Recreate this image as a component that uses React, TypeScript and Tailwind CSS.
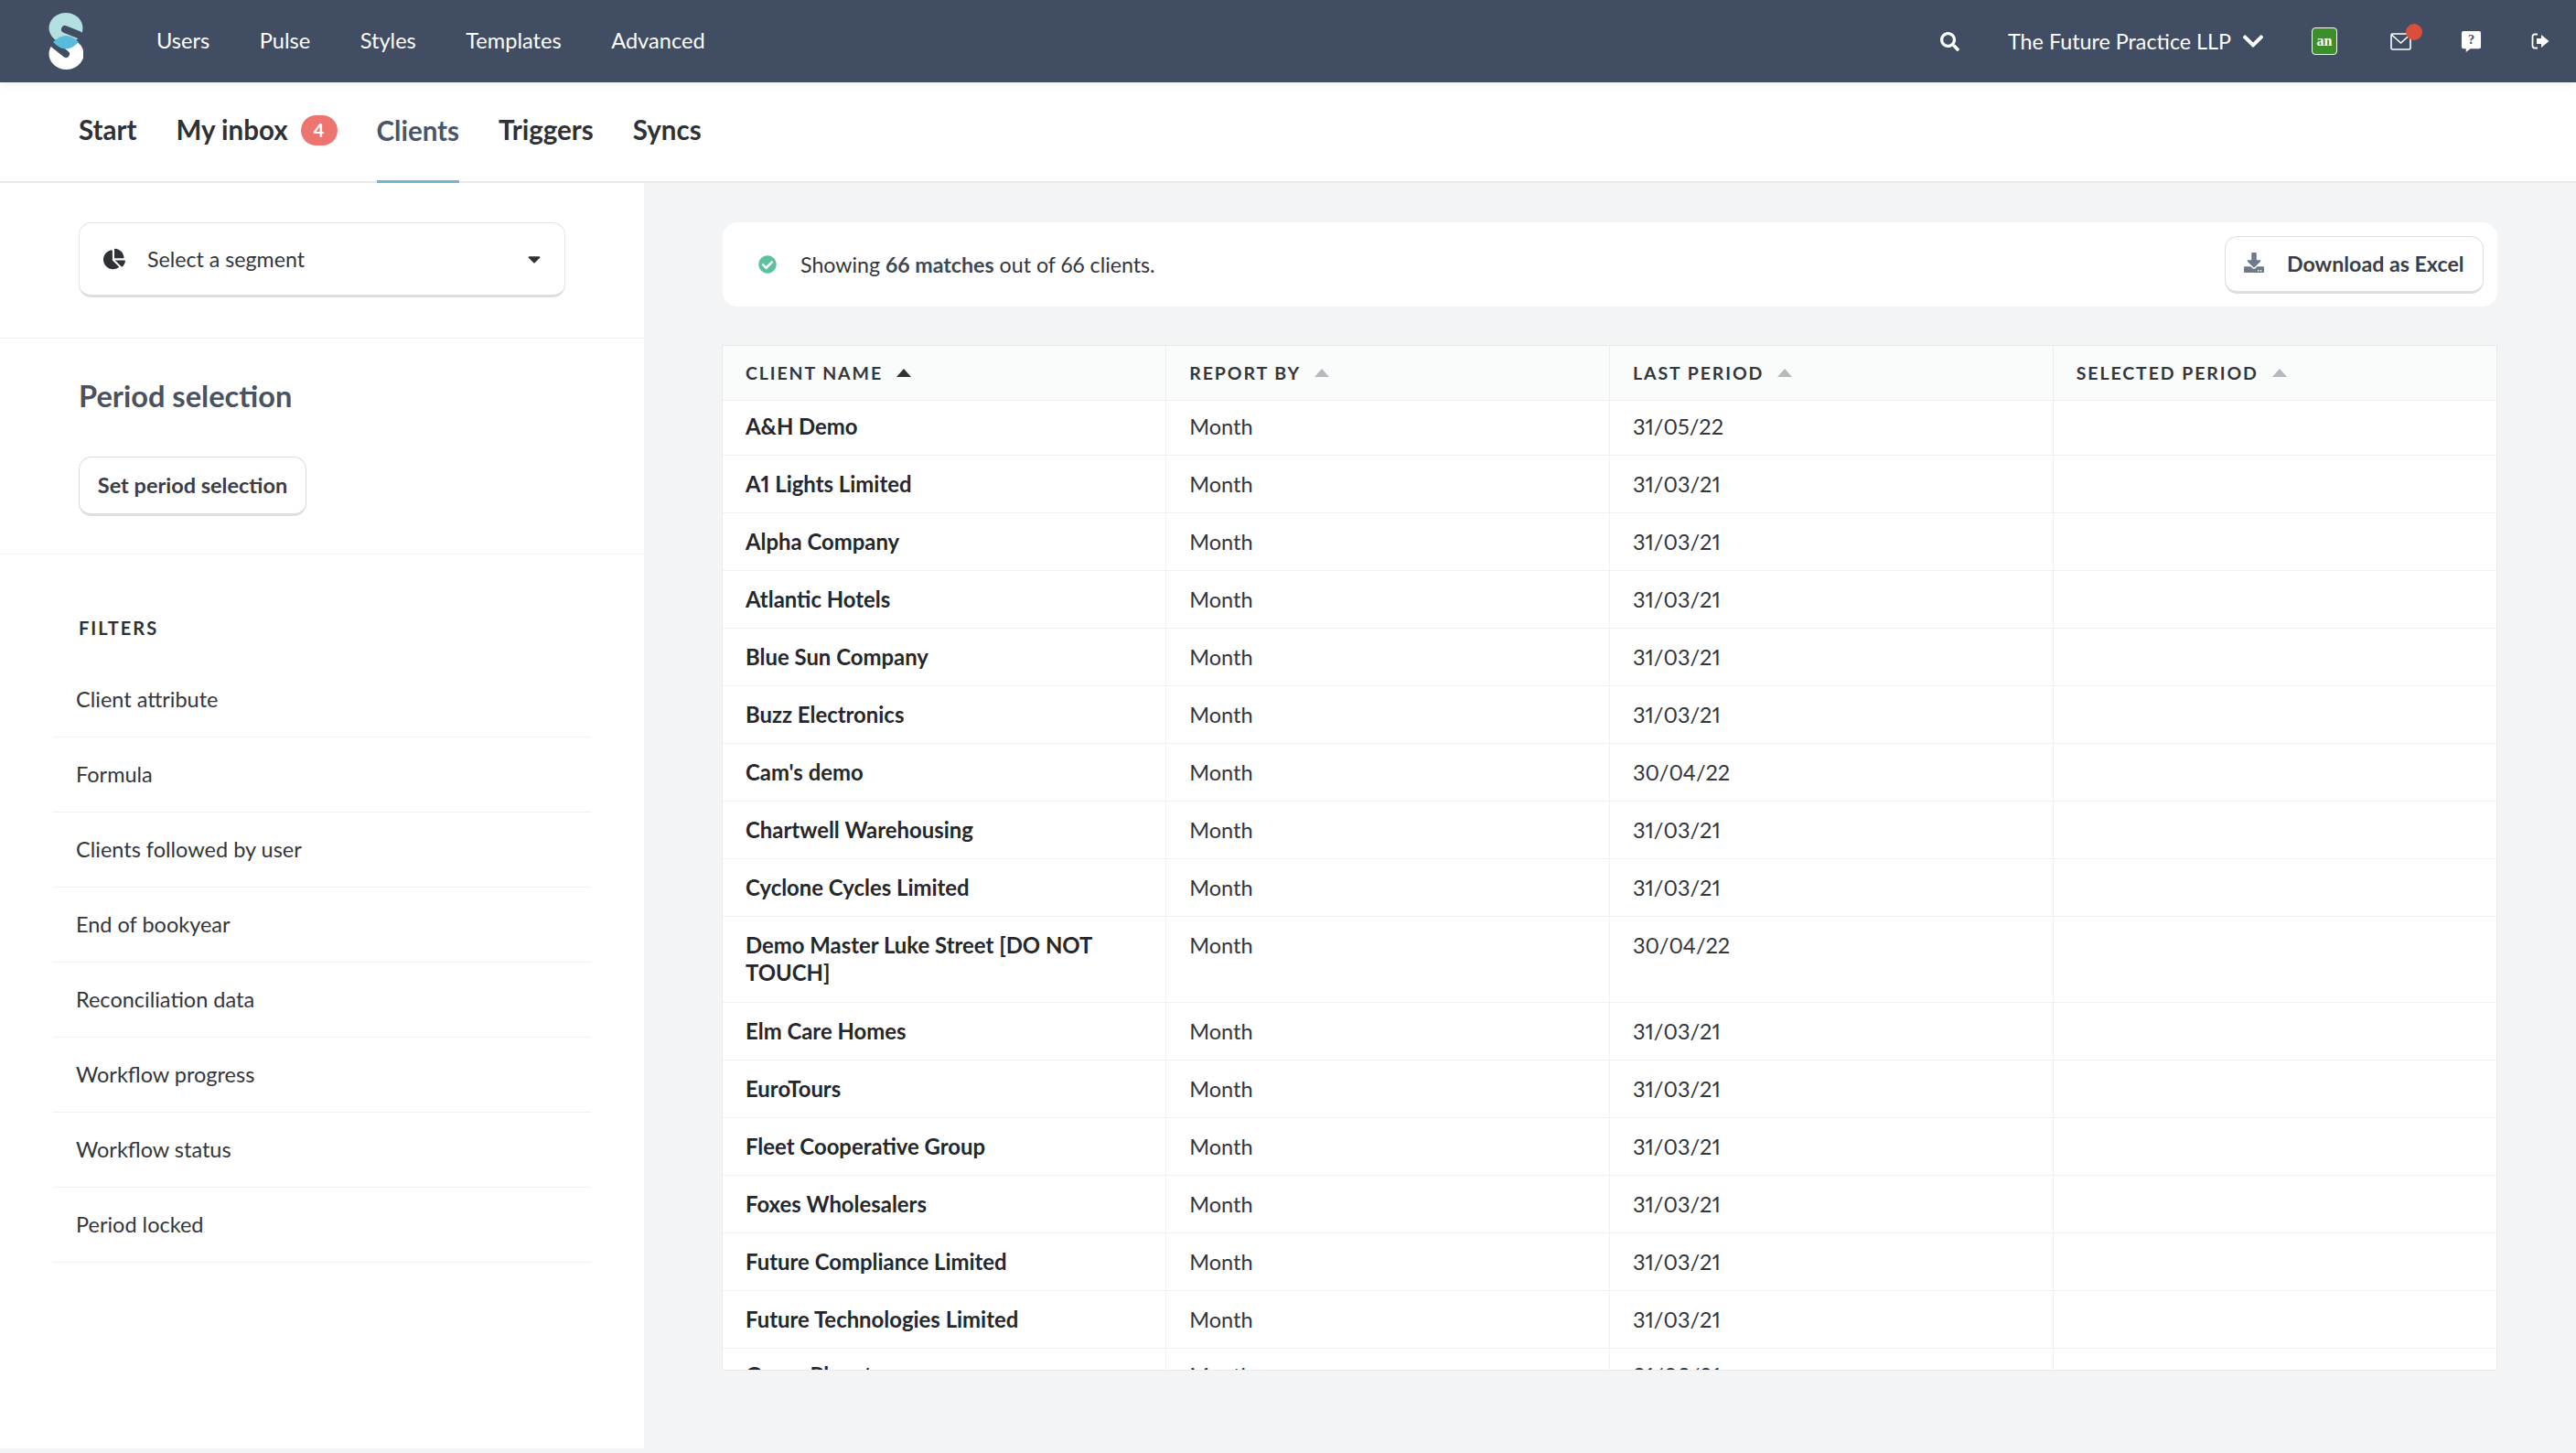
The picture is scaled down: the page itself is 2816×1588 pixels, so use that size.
import React from 'react';
import { FaSearch, FaChevronDown, FaChartPie, FaCaretDown, FaCheckCircle, FaDownload } from 'react-icons/fa';

const navItems = ['Users', 'Pulse', 'Styles', 'Templates', 'Advanced'];
const filters = ['Client attribute', 'Formula', 'Clients followed by user', 'End of bookyear', 'Reconciliation data', 'Workflow progress', 'Workflow status', 'Period locked'];
const columns = ['CLIENT NAME', 'REPORT BY', 'LAST PERIOD', 'SELECTED PERIOD'];

const clients = [
  ['A&H Demo', '31/05/22'],
  ['A1 Lights Limited', '31/03/21'],
  ['Alpha Company', '31/03/21'],
  ['Atlantic Hotels', '31/03/21'],
  ['Blue Sun Company', '31/03/21'],
  ['Buzz Electronics', '31/03/21'],
  ["Cam's demo", '30/04/22'],
  ['Chartwell Warehousing', '31/03/21'],
  ['Cyclone Cycles Limited', '31/03/21'],
  ['Demo Master Luke Street [DO NOT TOUCH]', '30/04/22'],
  ['Elm Care Homes', '31/03/21'],
  ['EuroTours', '31/03/21'],
  ['Fleet Cooperative Group', '31/03/21'],
  ['Foxes Wholesalers', '31/03/21'],
  ['Future Compliance Limited', '31/03/21'],
  ['Future Technologies Limited', '31/03/21'],
  ['Green Planet', '31/03/21'],
];

const Logo = () => (
  <svg width="38" height="62" viewBox="13 9 38 62">
    <ellipse cx="32" cy="25.5" rx="18.5" ry="16.5" fill="#b3dfe1" />
    <ellipse cx="32.5" cy="54" rx="19" ry="17" fill="#ffffff" />
    <path d="M31 27 L46 33" stroke="#414d63" strokeWidth="8" strokeLinecap="round" />
    <path d="M32 54 L17 42" stroke="#414d63" strokeWidth="8" strokeLinecap="round" />
    <path d="M18 41 Q32 27 46 41 Q32 56 18 41 Z" fill="#58bbdc" />
  </svg>
);

const App: React.FC = () => {
  const cellPad = (i: number) => {
    if (i === 0) return 'pt-[13px] pb-[16px]';
    if (i === 9) return 'pt-[16px] pb-[17px]';
    if (i === 16) return 'pt-[14px] pb-[16px]';
    return 'pt-[16px] pb-[16px]';
  };

  return (
    <div className="h-[1588px] w-[2816px] overflow-hidden flex flex-col bg-[#f2f4f5] font-['Lato',sans-serif] text-[#33363b] proportional-nums">
      <header className="relative z-10 h-[90px] shrink-0 bg-[#414d63] flex items-center text-white shadow-[0_3px_8px_rgba(0,0,0,0.05)]">
        <div className="w-[171px] pl-[53px]"><Logo /></div>
        <nav className="flex gap-[54.5px] text-[23.6px]">
          {navItems.map(n => <span key={n}>{n}</span>)}
        </nav>
        <div className="ml-auto flex items-center pr-[29px]">
          <FaSearch size={21} />
          <span className="ml-[53px] text-[23.3px]">The Future Practice LLP</span>
          <FaChevronDown size={26} className="ml-[11px]" />
          <span className="ml-[51px] w-[28px] h-[30px] rounded-[4px] bg-[#3b8f2a] border border-white flex items-center justify-center text-[16px] font-bold font-['Liberation_Serif',serif]">an</span>
          <span className="relative ml-[58px]">
            <svg className="block" width="23" height="19" viewBox="0 0 23 19" fill="none" stroke="#ffffff" strokeWidth="1.6">
              <rect x="1" y="1" width="21" height="17" rx="1.5" />
              <path d="M1.5 2 L11.5 11 L21.5 2" />
            </svg>
            <span className="absolute -top-[10px] left-[17px] w-[18px] h-[18px] rounded-full bg-[#d8503a]" />
          </span>
          <svg className="ml-[54px]" width="23" height="25" viewBox="0 0 24 26">
            <path d="M3 1 H21 A2 2 0 0 1 23 3 V19 A2 2 0 0 1 21 21 H11 L6 25 V21 H3 A2 2 0 0 1 1 19 V3 A2 2 0 0 1 3 1 Z" fill="#ffffff" />
            <text x="12" y="16" textAnchor="middle" fontSize="15" fontWeight="700" fill="#414d63" fontFamily="Liberation Serif, serif">?</text>
          </svg>
          <svg className="ml-[54px]" width="20" height="18" viewBox="0 0 20 18">
            <path d="M7 1.5 H4 A2.5 2.5 0 0 0 1.5 4 V14 A2.5 2.5 0 0 0 4 16.5 H7" fill="none" stroke="#ffffff" strokeWidth="1.8" />
            <path d="M6 6 H11 V2 L19.5 9 L11 16 V12 H6 Z" fill="#ffffff" />
          </svg>
        </div>
      </header>

      <div className="h-[110px] shrink-0 bg-white border-b-2 border-[#e8eaec] flex pl-[86px] gap-[43px] text-[29.5px] font-bold text-[#2e3135]">
        <span className="flex items-center pb-[4px]">Start</span>
        <span className="flex items-center pb-[4px]">
          My inbox
          <span className="ml-[14px] w-[40px] h-[33px] rounded-full bg-[#ee7470] text-white text-[20px] font-bold flex items-center justify-center">4</span>
        </span>
        <span className="flex items-center pb-[1px] text-[#4a5568] border-b-[3px] border-[#6db8cc] -mb-[2px]">Clients</span>
        <span className="flex items-center pb-[4px]">Triggers</span>
        <span className="flex items-center pb-[4px]">Syncs</span>
      </div>

      <div className="flex flex-1 min-h-0 pb-[5px]">
        <aside className="w-[704px] shrink-0 bg-white">
          <div className="h-[170px] pt-[43px] pl-[86px] border-b border-[#f0f1f3]">
            <div className="w-[532px] h-[82px] rounded-[14px] border border-[#e3e5e8] border-b-[3px] border-b-[#dcdee1] flex items-center pl-[26px] pr-[22px] text-[23.2px]">
              <FaChartPie size={24} className="text-[#2e3135]" />
              <span className="ml-[24px]">Select a segment</span>
              <FaCaretDown size={22} className="ml-auto text-[#2e3135]" />
            </div>
          </div>
          <div className="h-[236px] pl-[86px] pt-[42px] border-b border-[#f0f1f3]">
            <h2 className="text-[32.6px] leading-[42px] font-bold text-[#4a5260]">Period selection</h2>
            <button className="mt-[45px] h-[65px] w-[249px] rounded-[14px] border border-[#dcdee1] border-b-[3px] bg-white text-[23.5px] font-bold text-[#3a3e47]">Set period selection</button>
          </div>
          <h3 className="ml-[86px] mt-[68px] text-[20px] leading-[24px] font-bold tracking-[2px] text-[#2e3135]">FILTERS</h3>
          <ul className="mx-[58px] mt-[26px] text-[23.5px]">
            {filters.map(f => (
              <li key={f} className="h-[82px] pl-[25px] flex items-center border-b border-[#f0f1f3]">{f}</li>
            ))}
          </ul>
        </aside>

        <main className="flex-1 min-w-0 pl-[86px] pr-[86px] pt-[43px]">
          <div className="h-[92px] rounded-[16px] bg-white flex items-center pl-[39px] pr-[15px] text-[23.2px]">
            <FaCheckCircle size={20} className="text-[#5cc19c]" />
            <span className="ml-[26px]">Showing <b className="font-bold text-[#3f4755]">66 matches</b> out of 66 clients.</span>
            <button className="ml-auto h-[63px] w-[283px] rounded-[14px] border border-[#dcdee1] border-b-[3px] flex items-center pl-[20px] text-[23.2px] font-bold text-[#3a3e47] bg-white">
              <FaDownload size={22} className="text-[#6e7a8a] -mt-[2px]" />
              <span className="ml-[25px]">Download as Excel</span>
            </button>
          </div>

          <div className="mt-[42px] -ml-[1px] h-[1121px] overflow-hidden bg-white border border-[#e8eaec]">
            <table className="w-full table-fixed border-collapse text-[23.5px]">
              <thead>
                <tr className="h-[59px] bg-[#fafbfb] border-b border-[#eceef0]">
                  {columns.map((c, i) => (
                    <th key={c} className={`px-[25px] text-left text-[19.5px] font-bold tracking-[1.9px] ${i < 3 ? 'border-r border-[#eceef0]' : ''}`}>
                      <span className="flex items-center gap-[15px]">
                        {c}
                        <svg width="16" height="9" viewBox="0 0 16 9"><path d="M8 0 L16 9 H0 Z" fill={i === 0 ? '#2e3135' : '#b4b9bf'} /></svg>
                      </span>
                    </th>
                  ))}
                </tr>
              </thead>
              <tbody>
                {clients.map(([name, last], i) => (
                  <tr key={name} className="border-b border-[#f0f1f3] align-top">
                    <td className={`px-[25px] text-[23.9px] leading-[30px] font-bold text-[#25272b] border-r border-[#f0f1f3] ${cellPad(i)}`}>{name}</td>
                    <td className={`px-[25px] leading-[30px] border-r border-[#f0f1f3] ${cellPad(i)}`}>Month</td>
                    <td className={`px-[25px] leading-[30px] border-r border-[#f0f1f3] ${cellPad(i)}`}>{last}</td>
                    <td />
                  </tr>
                ))}
              </tbody>
            </table>
          </div>
        </main>
      </div>
    </div>
  );
};

export default App;
